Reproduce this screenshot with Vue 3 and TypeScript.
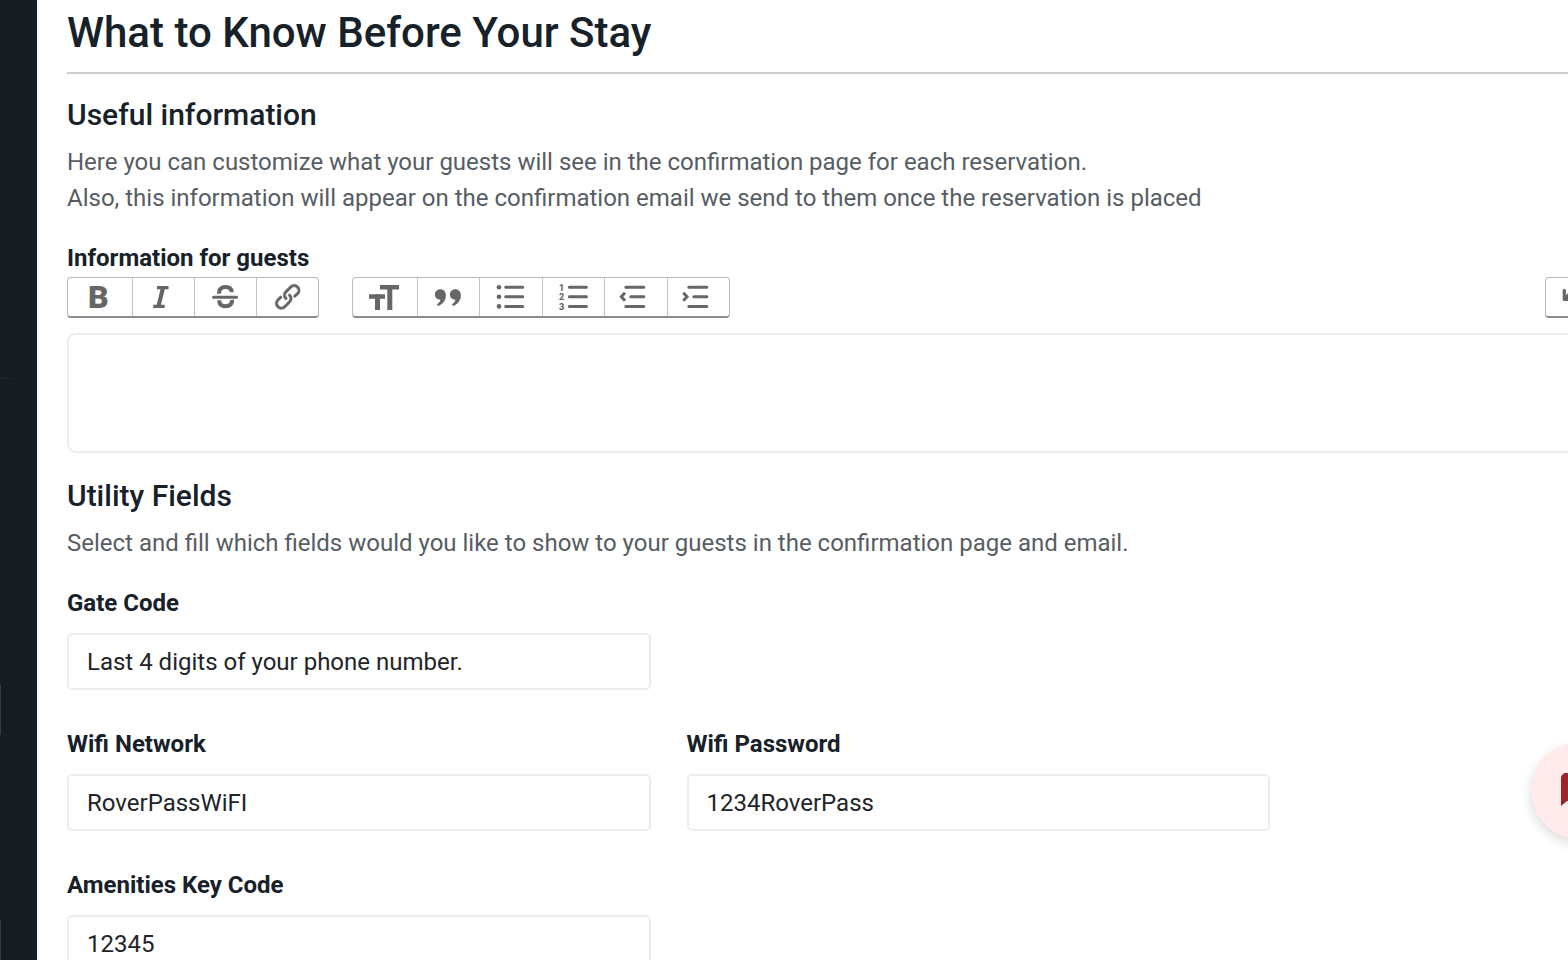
<script setup lang="ts">
import { ref } from 'vue'

const guestInfo = ref('')
const gateCode = ref('Last 4 digits of your phone number.')
const wifiNetwork = ref('RoverPassWiFI')
const wifiPassword = ref('1234RoverPass')
const amenitiesCode = ref('12345')
</script>

<template>
  <div class="page">
    <aside class="sidebar">
      <span class="divider"></span>
      <span class="edge first"></span>
      <span class="edge second"></span>
    </aside>
    <main class="content">
      <h1>What to Know Before Your Stay</h1>

      <section>
        <h2>Useful information</h2>
        <p>
          Here you can customize what your guests will see in the confirmation page for each reservation.<br />
          Also, this information will appear on the confirmation email we send to them once the reservation is placed
        </p>
        <label class="label editor-label" for="guest-info">Information for guests</label>
        <div class="toolbar">
          <div class="group text-tools">
            <button type="button" aria-label="Bold">
              <svg viewBox="0 0 40 40"><text class="bold" x="8" y="31">B</text></svg>
            </button>
            <button type="button" aria-label="Italic">
              <svg viewBox="0 0 40 40"><path d="M13 9h11.500v3.200h-3.700L17 27.800h3.700V31H9.200v-3.200h3.500l3.800-15.600H13z" /></svg>
            </button>
            <button type="button" aria-label="Strikethrough">
              <svg viewBox="0 0 40 40">
                <path class="line" d="M7.500 20.200h23" />
                <path class="thick" d="M13.200 16.700c-.6-4 2-6.600 6.400-6.600 3.800 0 5.900 1.700 6.200 5M13.200 23.200c0 4 2.300 6 6.400 6 4.400 0 6.900-2.300 6.300-6.300" />
              </svg>
            </button>
            <button type="button" aria-label="Link">
              <svg viewBox="0 0 40 40">
                <g class="link" transform="translate(3 3) scale(1.42)">
                  <path d="M9.880 13.700a4.300 4.300 0 0 1 0-6.070l3.370-3.370a4.260 4.260 0 0 1 6.070 0 4.300 4.300 0 0 1 0 6.060l-1.960 1.720a.91.91 0 1 1-1.300-1.300l1.970-1.710a2.460 2.460 0 0 0-3.480-3.480l-3.380 3.370a2.460 2.460 0 0 0 0 3.480.91.91 0 1 1-1.300 1.300z" />
                  <path d="M4.250 19.460a4.300 4.300 0 0 1 0-6.070l1.930-1.900a.91.91 0 1 1 1.300 1.300l-1.930 1.900a2.460 2.460 0 0 0 3.480 3.480l3.370-3.380c.96-.96.96-2.520 0-3.480a.91.91 0 1 1 1.300-1.300 4.300 4.300 0 0 1 0 6.070l-3.380 3.380a4.260 4.260 0 0 1-6.070 0z" />
                </g>
              </svg>
            </button>
          </div>
          <div class="group block-tools">
            <button type="button" aria-label="Heading">
              <svg viewBox="0 0 40 40">
                <rect x="15" y="8" width="19" height="4.500" /><rect x="22.300" y="8" width="5" height="25" />
                <rect x="4" y="17.300" width="16" height="4.500" /><rect x="10" y="17.300" width="5" height="15.700" />
              </svg>
            </button>
            <button type="button" aria-label="Quote">
              <svg viewBox="0 0 40 40">
                <path d="M11.200 12.200c3.400 0 5.700 2.400 5.700 6.200 0 5-3.400 9-7.400 10.300-1.200.3-1.900-.9-1-1.700 1.600-1.300 2.600-2.600 2.900-4.200-3.200.1-5.500-2.200-5.500-5.200 0-3.100 2.300-5.400 5.300-5.400z" />
                <path d="M26.200 12.200c3.400 0 5.700 2.400 5.700 6.200 0 5-3.400 9-7.400 10.300-1.200.3-1.900-.9-1-1.700 1.600-1.300 2.600-2.600 2.900-4.200-3.200.1-5.500-2.200-5.500-5.200 0-3.100 2.300-5.400 5.300-5.400z" />
              </svg>
            </button>
            <button type="button" aria-label="Bullets">
              <svg viewBox="0 0 40 40">
                <circle cx="8" cy="10.300" r="2.300" /><circle cx="8" cy="19.800" r="2.300" /><circle cx="8" cy="29.400" r="2.300" />
                <path class="line" d="M14.700 10.300h17M14.700 19.800h17M14.700 29.400h17" />
              </svg>
            </button>
            <button type="button" aria-label="Numbers">
              <svg viewBox="0 0 40 40">
                <text class="digit" x="5" y="13.500">1</text><text class="digit" x="5" y="23">2</text><text class="digit" x="5" y="32.500">3</text>
                <path class="line" d="M15.400 10.300h17M15.400 19.800h17M15.400 29.400h17" />
              </svg>
            </button>
            <button type="button" aria-label="Decrease level">
              <svg viewBox="0 0 40 40">
                <path class="line" d="M9.800 10.300h18M14.800 19.800h13M9.800 29.400h18" />
                <path class="chevron" d="M9 15.800l-3.700 4L9 23.800" />
              </svg>
            </button>
            <button type="button" aria-label="Increase level">
              <svg viewBox="0 0 40 40">
                <path class="line" d="M10.800 10.300h18M15.800 19.800h13M10.800 29.400h18" />
                <path class="chevron" d="M5.300 15.800l3.700 4-3.700 4" />
              </svg>
            </button>
          </div>
          <div class="group history-tools">
            <button type="button" aria-label="Undo">
              <svg viewBox="0 0 40 40">
                <path d="M4.700 13.500c0-1.800 2.800-2 3.200-.2v5.200c3-4 7-6 12.100-6 6 0 11 3 14 8 .9 1.700-1.500 3.200-2.700 1.600-2.700-4-6.500-6-11.300-6-4 0-7.200 1.600-9.500 4.600h4.500c2 0 2 3.300 0 3.300H6.200c-1 0-1.500-.6-1.500-1.500z" />
              </svg>
            </button>
            <button type="button" aria-label="Redo">
              <svg viewBox="0 0 40 40">
                <path transform="translate(40 0) scale(-1 1)" d="M4.700 13.500c0-1.800 2.800-2 3.200-.2v5.200c3-4 7-6 12.100-6 6 0 11 3 14 8 .9 1.700-1.500 3.200-2.700 1.600-2.700-4-6.500-6-11.300-6-4 0-7.200 1.600-9.500 4.600h4.500c2 0 2 3.300 0 3.300H6.200c-1 0-1.500-.6-1.500-1.500z" />
              </svg>
            </button>
          </div>
        </div>
        <textarea id="guest-info" v-model="guestInfo"></textarea>
      </section>

      <section>
        <h2>Utility Fields</h2>
        <p>Select and fill which fields would you like to show to your guests in the confirmation page and email.</p>
        <div class="fields">
          <div class="field start">
            <label class="label" for="gate-code">Gate Code</label>
            <input id="gate-code" v-model="gateCode" type="text" />
          </div>
          <div class="field start">
            <label class="label" for="wifi-network">Wifi Network</label>
            <input id="wifi-network" v-model="wifiNetwork" type="text" />
          </div>
          <div class="field">
            <label class="label" for="wifi-password">Wifi Password</label>
            <input id="wifi-password" v-model="wifiPassword" type="text" />
          </div>
          <div class="field start">
            <label class="label" for="amenities-code">Amenities Key Code</label>
            <input id="amenities-code" v-model="amenitiesCode" type="text" />
          </div>
        </div>
      </section>
    </main>
    <button class="chat" type="button" aria-label="Open chat">
      <svg viewBox="0 0 36 36"><path d="M5 0h26a5 5 0 0 1 5 5v18a5 5 0 0 1-5 5H6L0 33V5a5 5 0 0 1 5-5z" /></svg>
    </button>
  </div>
</template>

<style>
body {
  margin: 0;
  overflow: hidden;
}
</style>

<style scoped>
* {
  box-sizing: border-box;
}
.page {
  position: relative;
  display: flex;
  height: 100vh;
  overflow: hidden;
  background: #fff;
  color: #17212a;
  font-family: Roboto, sans-serif;
  font-size: 24px;
  line-height: 36px;
}
.sidebar {
  position: relative;
  flex: 0 0 37px;
  background: #151c22;
}
.divider {
  position: absolute;
  top: 378px;
  left: 0;
  width: 24px;
  height: 1px;
  background: linear-gradient(90deg, #222a30, #151c22);
}
.edge {
  position: absolute;
  left: 0;
  width: 1px;
  height: 50px;
  background: #343b41;
}
.edge.first {
  top: 685px;
}
.edge.second {
  top: 920px;
}
.content {
  flex: 1 0 auto;
  width: calc(100% + 66px);
  padding: 0 0 0 30px;
}
h1 {
  margin: 0 0 20px;
  padding: 8px 0 14px;
  border-bottom: 2px solid #cbcdcf;
  font-size: 42px;
  font-weight: 500;
  line-height: 50px;
}
h2 {
  margin: 0;
  padding: 3px 0 11px;
  font-size: 30px;
  font-weight: 500;
  line-height: 36px;
}
p {
  margin: 0 0 24px;
  color: #565d63;
}
.label {
  display: block;
  font-weight: 700;
}
.toolbar {
  display: flex;
  margin: 1px 0 15px;
}
.group {
  display: flex;
  height: 41px;
  border: 1px solid #bbb;
  border-bottom: 2px solid #8c8c8c;
  border-radius: 4px;
}
.text-tools {
  width: 252px;
  margin-right: 33px;
}
.block-tools {
  width: 378px;
}
.history-tools {
  width: 126px;
  margin-left: auto;
}
.group button {
  display: flex;
  flex: 1;
  align-items: center;
  justify-content: center;
  padding: 0;
  border: 0;
  border-left: 1px solid #c4c4c4;
  background: none;
}
.group button:first-child {
  flex: 0 0 64px;
  border-left: 0;
}
.group svg {
  flex: none;
  width: 40px;
  height: 40px;
  fill: #666;
}
.line,
.thick,
.chevron {
  fill: none;
  stroke: #666;
}
.line {
  stroke-width: 3;
  stroke-linecap: round;
}
.thick {
  stroke-width: 4;
}
.chevron {
  stroke-width: 3;
}
.link {
  stroke: #666;
  stroke-width: 0.3;
}
.bold {
  font: 900 32px Roboto, sans-serif;
}
.digit {
  font: 900 9px Roboto, sans-serif;
}
textarea {
  display: block;
  width: 100%;
  height: 120px;
  margin: 0 0 22px;
  padding: 12px 18px;
  border: 2px solid #e9eef0;
  border-radius: 9px;
  background: #fff;
  color: inherit;
  font: inherit;
  resize: none;
}
.fields {
  display: grid;
  grid-template-columns: 1fr 1fr;
  gap: 36px;
  width: 75%;
}
.start {
  grid-column-start: 1;
}
.field input {
  display: block;
  width: 100%;
  height: 57px;
  margin-top: 12px;
  padding: 0 18px;
  border: 2px solid #e9eef0;
  border-radius: 5px;
  background: #fff;
  color: #212529;
  font: inherit;
}
.chat {
  position: absolute;
  right: -59px;
  bottom: 121px;
  display: flex;
  align-items: center;
  justify-content: center;
  width: 96px;
  height: 96px;
  padding: 0;
  border: 0;
  border-radius: 50%;
  background: #ffebeb;
  box-shadow: 0 4px 12px rgba(0, 0, 0, 0.15);
}
.chat svg {
  width: 36px;
  height: 36px;
  fill: #9b2528;
}
</style>
